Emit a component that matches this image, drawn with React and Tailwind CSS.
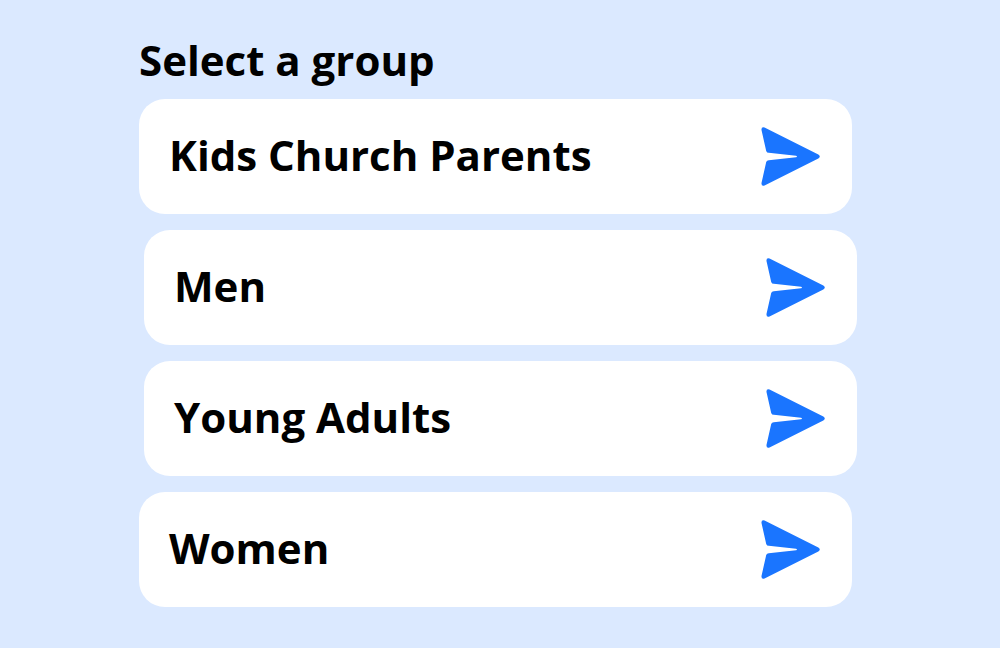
import React, { useState } from 'react';

const groups = [
  { id: 1, name: 'Kids Church Parents', indent: false },
  { id: 2, name: 'Men', indent: true },
  { id: 3, name: 'Young Adults', indent: true },
  { id: 4, name: 'Women', indent: false },
];

const SendIcon = () => (
  <svg viewBox="0 0 60 60" className="w-[59px] h-[59px] shrink-0" fill="#1a75ff" aria-hidden="true">
    <path d="M3.6.5 58.3 27.9Q61.3 30 58.3 32.1L3.6 59.5Q.2 60.6 .5 57L5.3 35.7Q5.9 33.9 7.9 33.7L35.7 30.8Q37.5 30 35.7 29.2L7.9 26.3Q5.9 26.1 5.3 24.3L.5 3Q.2-.6 3.6.5Z" />
  </svg>
);

const App = () => {
  const [selectedGroup, setSelectedGroup] = useState(null);

  return (
    <div className="min-h-screen bg-[#dbe9ff] pl-4 pr-5 pt-8 pb-10 font-['Open_Sans',sans-serif] font-bold text-black">
      <div className="max-w-[718px] mx-auto">
        <h1 className="text-[42px] leading-[55px] mb-3">Select a group</h1>

        {/* Group list */}
        <ul className="flex flex-col gap-4">
          {groups.map((group) => (
            <li key={group.id} className={group.indent ? 'pl-[5px]' : 'pr-[5px]'}>
              <button
                type="button"
                aria-pressed={selectedGroup === group.id}
                onClick={() => setSelectedGroup(group.id)}
                className="w-full flex items-start justify-between bg-white rounded-[26px] pl-[30px] pr-8 py-7 text-left text-[42px] leading-[55px] cursor-pointer"
              >
                {group.name}
                <SendIcon />
              </button>
            </li>
          ))}
        </ul>
      </div>
    </div>
  );
};

export default App;
